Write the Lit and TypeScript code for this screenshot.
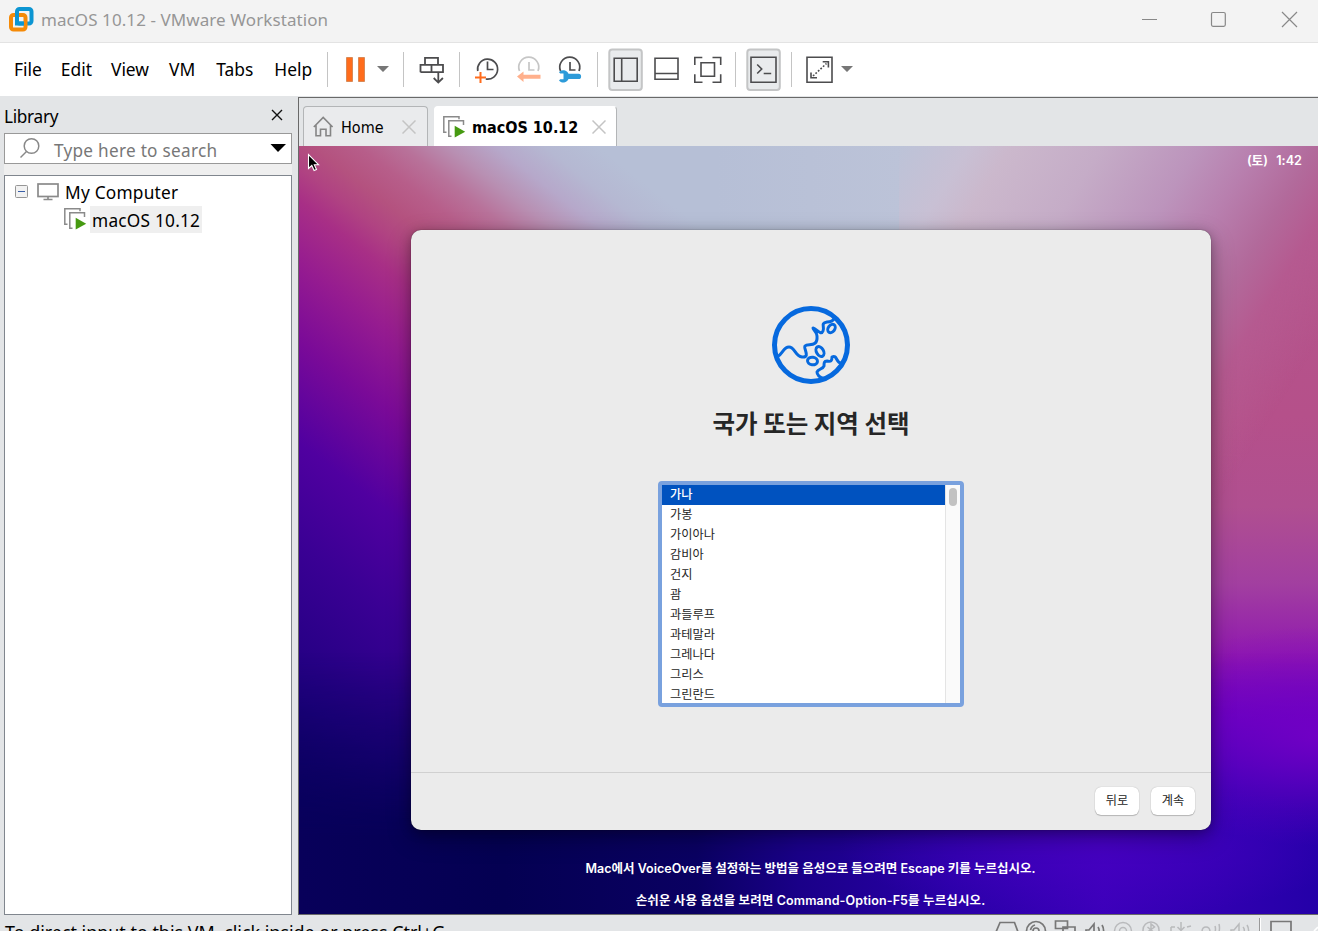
import { LitElement, html, css, svg } from "lit";
import { customElement } from "lit/decorators.js";

const countries = ["가나", "가봉", "가이아나", "감비아", "건지", "괌", "과들루프", "과테말라", "그레나다", "그리스", "그린란드"];

const vmIcon = html`<svg width="24" height="24" viewBox="0 0 24 24" fill="none" stroke="#8a8a8a" stroke-width="1.5">
  <path d="M4.5 17.2H1.8V1.8H17V4.2M9.5 21.2H6.8V5.8H21.5V10"/><path d="M12.7 10.8V22.6L23.2 16.7Z" fill="#469a11" stroke="none"/></svg>`;

@customElement("app-root")
export class AppRoot extends LitElement {
  static styles = css`
    :host { display: flex; flex-direction: column; width: 1318px; height: 931px; overflow: hidden; background: #e3e5e7; color: #000; font-family: "Noto Sans", sans-serif; }
    * { box-sizing: border-box; }
    svg { display: block; flex: none; }
    .titlebar { height: 43px; flex: none; background: #f3f3f3; border-bottom: 1px solid #e3e3e3; display: flex; padding: 7px 20px 0 9px; }
    .titlebar .name { margin: -1px 0 0 7px; line-height: 28px; font-size: 17px; color: #969696; flex: 1; letter-spacing: 0.08px; }
    .winbtns { display: flex; gap: 54px; padding-top: 4px; }
    .winbtns .min { margin-right: -2px; }
    .toolbar { height: 54px; flex: none; background: #fff; display: flex; padding-left: 14px; border-bottom: 1px solid #e3e5e7; }
    .menu { display: flex; gap: 20px; font-size: 17.4px; line-height: 53px; width: 313px; }
    .menu span:nth-child(2), .menu span:nth-child(3) { margin-left: -1px; }
    .menu span:nth-child(5), .menu span:nth-child(6) { margin-left: 1px; }
    .body { flex: none; height: 818px; display: flex; }
    .library { width: 298px; padding: 0 6px 0 4px; display: flex; flex-direction: column; }
    .libhead { height: 36px; display: flex; justify-content: space-between; padding: 0 9px 0 0; font-size: 17.2px; letter-spacing: -.3px; line-height: 39px; }
    .libhead svg { margin-top: 12px; }
    .search { height: 31px; border: 1px solid #999; background: #fff; display: flex; align-items: flex-start; font-size: 17.2px; line-height: 33px; color: #777; padding-right: 5px; }
    .search .ph { flex: 1; margin-left: 13px; letter-spacing: .27px; }
    .band { height: 11px; background: #efefef; }
    .tree { flex: 1; border: 1px solid #80868e; background: #fff; padding-top: 2px; font-size: 17.3px; letter-spacing: .22px; }
    .row { display: flex; align-items: center; height: 27px; }
    .root { padding-left: 10px; gap: 9px; }
    .root .label { margin-left: -3px; line-height: 27px; padding-top: 1px; }
    .child { padding-left: 58px; height: 28px; }
    .child .label { background: #efefef; height: 27px; line-height: 29px; padding: 0 2px; margin-left: 3px; }
    .main { flex: 1; border-left: 1px solid #696969; border-top: 1px solid #696969; border-bottom: 1px solid #696969; display: flex; flex-direction: column; }
    .tabs { height: 48px; display: flex; align-items: flex-end; padding-left: 4px; gap: 6px; font: 16px "DejaVu Sans Condensed", "DejaVu Sans", sans-serif; font-stretch: condensed; }
    .tab { display: flex; align-items: center; height: 40px; border: 1px solid #b3b5b7; border-bottom: 0; border-radius: 4px 4px 0 0; background: #eaebed; }
    .tab .t { padding-top: 2px; }
    .home { width: 125px; padding: 0 11px 0 9px; }
    .home .t { margin-left: 7px; flex: 1; }
    .active { width: 183px; background: #fff; border-color: #fff #b3b5b7 #fff #fff; font-weight: 700; padding: 0 10px 0 7px; }
    .active .t { margin-left: 6px; flex: 1; white-space: nowrap; }
    .screen { height: 768px; position: relative; overflow: hidden; display: flex; flex-direction: column; align-items: center; font-family: Inter, "Noto Sans CJK KR", sans-serif; background: #38009a; }
    .layer, .pointer { position: absolute; inset: 0; }
    .base { background: linear-gradient(180deg, #b5588c 0, #b5508a 35%, #b04f90 47%, #a23fa0 57%, #8f16b0 67%, #7800c4 75%, #5000c0 83%, #3600b4 90%, #2200a8 100%); }
    .sky { height: 100px; right: 300px; background: linear-gradient(90deg, #b6bfd6 58%, #bcc3d8 84%); }
    .left { width: 420px; background: linear-gradient(218deg, #b6bfd6 0, #b6bfd6 75px, #b5b8d2 108px, #b6a8ca 138px, #b88fb2 168px, #b8729a 195px, #b75e8a 222px, #b4527f 250px, #b04382 275px, #a82f86 301px, #961c90 350px, #7a0a98 412px, #5000a0 492px, #3a0094 572px, #200080 690px, #0c0068 776px, #08005a 870px); }
    .right { left: 600px; background: linear-gradient(122deg, #bcc3d8 0, #c8c0d4 60px, #cbb8cc 95px, #c5acc7 173px, #bc94bc 255px, #b87fae 305px, #b26a9b 355px, #b55a90 395px, #b5588c00 460px); -webkit-mask-image: linear-gradient(#000 40%, transparent 60%); mask-image: linear-gradient(#000 40%, transparent 60%); }
    .bottom { background: linear-gradient(90deg, #08005a 0, #040052 20%, #0a0062 39%, #1a0088 49%, #2a00a8 64%, #3c00ba 79%, #3000b0 91%, #2400a8 100%); -webkit-mask-image: linear-gradient(transparent 66%, #0008 80%, #000 90%); mask-image: linear-gradient(transparent 66%, #0008 80%, #000 90%); }
    .glow { background: radial-gradient(ellipse 260px 70px at 800px 700px, #4a00c4aa, #4a00c400), radial-gradient(ellipse 200px 110px at 1019px 590px, #7800c8cc, #7800c800); }
    .pointer { inset: 7px auto auto 8px; }
    .clock { position: relative; align-self: stretch; flex: none; text-align: right; height: 84px; line-height: 29px; padding-right: 16px; color: #fff; font-size: 12.700px; font-weight: 600; word-spacing: 5px; }
    .dialog { position: relative; width: 800px; height: 600px; margin-left: 5px; flex: none; border-radius: 10px; background: #ebebeb; box-shadow: 0 0 1px #000a, 0 2px 12px #0004, 0 8px 24px #0004; display: flex; flex-direction: column; align-items: center; }
    .globe { margin-top: 75px; }
    .dialog h1 { margin: 18px 0 0; height: 40px; font: 700 24.500px/40px "Noto Sans CJK KR", sans-serif; color: #262626; }
    .list { margin-top: 38px; width: 306px; height: 226px; border: 4px solid #79a1de; border-radius: 4px; background: #fff; display: flex; overflow: hidden; }
    .items { flex: 1; color: #262626; font: 400 12.200px/20px "Noto Sans CJK KR", sans-serif; }
    .item { height: 20px; padding-left: 8px; line-height: 19px; }
    .sel { background: #0052bf; color: #fff; font-weight: 500; }
    .scroll { width: 15px; background: #fafafa; border-left: 1px solid #e4e4e4; padding: 3px 0 0 3px; }
    .thumb { width: 8px; height: 18px; border-radius: 4px; background: #c2c2c2; }
    .foot { margin-top: auto; align-self: stretch; height: 58px; border-top: 1px solid #d0d0d0; display: flex; justify-content: flex-end; gap: 12px; padding: 14px 16px 0; }
    .btn { width: 44px; height: 28px; border-radius: 6px; background: #fff; box-shadow: 0 0 1px #0005, 0 1px 1px #0003; text-align: center; color: #262626; font: 400 12.200px/27px "Noto Sans CJK KR", sans-serif; }
    .hint { position: relative; margin-left: 4px; color: #fff; font-size: 12.500px; font-weight: 600; line-height: 32px; white-space: nowrap; height: 32px; }
    .first { margin-top: 23px; }
    .second { letter-spacing: .13px; }
    .status { height: 17px; display: flex; justify-content: space-between; overflow: hidden; }
    .msg { font-size: 17.900px; line-height: 24px; padding: 5px 0 0 5px; white-space: nowrap; }
  `;

  toolbarIcons() {
    return svg`
      <g fill="#c4c4c4"><path d="M0 9h1v35h-1zM76 9h1v35h-1zM132 9h1v35h-1zM270 9h1v35h-1zM408 9h1v35h-1zM464 9h1v35h-1z"/></g>
      <path d="M19.500 14.500h6v24h-6zM31.500 14.500h6v24h-6z" fill="#ff6c1c" stroke="#c9763f" stroke-width=".7"/>
      <path d="M50 23h12l-6 6zM514 23h12l-6 6z" fill="#777"/>
      <g fill="none" stroke="#4c4c4e" stroke-width="1.700">
        <path d="M98 21.800V14.800h13v7M93.500 29.200v-7.400h22.500v7.400H93.500M104.500 22v7M111.300 29v10.500M106.700 35l4.600 4.600 4.600-4.600" stroke-width="1.800"/>
        <path d="M150.800 28.500a10 10 0 1 1 8 8M160.500 19v8h6" transform="translate(0 -.5)"/>
        <path d="M192.500 28a10 10 0 1 1 18.500 0M202 19v8h5.500" stroke="#c6c6c6"/>
        <path d="M233.500 28a10 10 0 1 1 18.500 0M243 19v8h5.500"/>
      </g>
      <path d="M153.500 29v11M148 34.500h11" stroke="#ff6c1c" stroke-width="2"/>
      <path d="M190 33.500l6.500-5v3.200h17v4h-17v3.200z" fill="#ffb08c"/>
      <path d="M232 29.200a5.600 5.600 0 0 1 9.500 1.600h10a2.600 2.600 0 0 1 0 5.200h-10a5.600 5.600 0 0 1-9.500 1.600l1.200-1.400h3.300v-5.600h-3.300z" fill="#2d9bd9"/>
      <g fill="#e9ebed" stroke="#c4c5c6" stroke-width="2"><rect x="282.300" y="6.500" width="32.500" height="40.500" rx="3"/><rect x="420.300" y="6.500" width="32.500" height="40.500" rx="3"/></g>
      <g fill="none" stroke="#4c4c4e" stroke-width="1.600">
        <path d="M287.200 15.300h23v23h-23zM294.700 15.500v22.500M328 15.300h23v21h-23zM328.200 30.500h22.500"/>
        <path d="M374 19.800h13.500v13.500h-13.500z"/>
        <path d="M367.800 22v-7.500h7.500M385.500 14.500h8.200V22M393.700 31.200v8H385.500M375.500 39.200h-7.700v-8"/>
        <path d="M424 14.300h25v25h-25zM480 14.300h25v25h-25z"/>
        <path d="M430.200 21.500l4.500 4.500-4.500 4.500M436.700 30.500h7.500M495.700 18.800h5.700v5.700M484 29.500v5.300h6"/>
        <path d="M486 33L499.500 20.500" stroke-dasharray="1.800 1.600"/>
      </g>`;
  }

  render() {
    return html`
      <div class="titlebar">
        <svg width="25" height="25" viewBox="0 0 25 25" fill="none" stroke-width="4"><rect x="8" y="2" width="14.500" height="14.500" rx="2.500" stroke="#0c95d2"/><rect x="2" y="8" width="14.500" height="14.500" rx="2.500" stroke="#f58a07"/><path d="M8 6v10.500h7" stroke="#0c95d2"/></svg>
        <span class="name">macOS 10.12 - VMware Workstation</span>
        <div class="winbtns">
          <svg class="min" width="17" height="17" stroke="#888" fill="none"><path d="M1 8.500h15"/></svg>
          <svg width="17" height="17" stroke="#888" fill="none" stroke-width="1.200"><rect x="1.500" y="1.500" width="13.800" height="13.800" rx="1.500"/></svg>
          <svg width="17" height="17" stroke="#888" fill="none" stroke-width="1.200"><path d="M1 1l15 15M16 1L1 16"/></svg>
        </div>
      </div>
      <div class="toolbar">
        <div class="menu"><span>File</span><span>Edit</span><span>View</span><span>VM</span><span>Tabs</span><span>Help</span></div>
        <svg width="540" height="53">${this.toolbarIcons()}</svg>
      </div>
      <div class="body">
        <div class="library">
          <div class="libhead"><span>Library</span><svg width="12" height="12" stroke="#111" stroke-width="1.400"><path d="M1 1l10 10M11 1L1 11"/></svg></div>
          <div class="search">
            <svg width="36" height="29" fill="none" stroke="#888" stroke-width="1.500"><circle cx="26.500" cy="12" r="7.300"/><path d="M21.500 17.500L15.500 23.500"/></svg>
            <span class="ph">Type here to search</span>
            <svg width="16" height="29"><path d="M.5 10h15.500l-8 8z"/></svg>
          </div>
          <div class="band"></div>
          <div class="tree">
            <div class="row root">
              <svg width="13" height="13"><rect x=".5" y=".5" width="12" height="12" rx="1" fill="#f2f2f2" stroke="#969696"/><path d="M3 6.500h7" stroke="#3a5fa8"/></svg>
              <svg width="22" height="18" fill="none" stroke="#8a8a8a" stroke-width="1.700"><rect x="1" y="1" width="20" height="12.500"/><path d="M11 13.500v3M6.500 16.500h9"/></svg>
              <span class="label">My Computer</span>
            </div>
            <div class="row child">${vmIcon}<span class="label">macOS 10.12</span></div>
          </div>
        </div>
        <div class="main">
          <div class="tabs">
            <div class="tab home">
              <svg width="21" height="21" fill="none" stroke="#858585" stroke-width="1.600"><path d="M.8 11L10.200 1.500 19.600 11M3 9.200v10.500h4.500v-6.500h5.500v6.500h4.500V9.200"/></svg>
              <span class="t">Home</span>
              <svg width="14" height="14" stroke="#c4c4c4" stroke-width="1.500"><path d="M.5.5l13 13M13.500.5l-13 13"/></svg>
            </div>
            <div class="tab active">${vmIcon}<span class="t">macOS 10.12</span>
              <svg width="14" height="14" stroke="#c4c4c4" stroke-width="1.500"><path d="M.5.5l13 13M13.500.5l-13 13"/></svg>
            </div>
          </div>
          <div class="screen">
            <div class="layer base"></div><div class="layer sky"></div><div class="layer left"></div><div class="layer right"></div><div class="layer bottom"></div><div class="layer glow"></div>
            <svg class="pointer" width="14" height="20" viewBox="0 0 14 20"><path d="M1.500 1.500v14l3.300-3 2.300 5 2.400-1-2.200-4.800h4.200z" fill="#000" stroke="#fff" stroke-width="1.100"/></svg>
            <div class="clock">(토) 1:42</div>
            <div class="dialog">
              <svg class="globe" width="80" height="80" viewBox="0 0 80 80" fill="none" stroke="#0669de" stroke-width="3" stroke-linecap="round" stroke-linejoin="round">
                <circle cx="40" cy="40" r="36.500" stroke-width="5"/>
                <path d="M6 52C12 49 12 42 18 42C24 42 24 51 31 52C40 53 32 43 34 41C37 38 47 43 46 31C46 27 42 25 42 23C46 24 50 31 52 26C54 22 49 18 56 17C60 17 63 15 64 12"/>
                <ellipse cx="60.500" cy="23.500" rx="3.300" ry="4.500" transform="rotate(35 60.500 23.500)"/><ellipse cx="49" cy="46.500" rx="3.500" ry="5.300" transform="rotate(-30 49 46.500)"/><ellipse cx="41.500" cy="56" rx="5" ry="3.800" transform="rotate(8 41.500 56)"/>
                <path d="M53 74C48 72 46 70 46 67C47 64 52 64 53 61C53 58 53 56 56 56C60 57 61 56 61 52C66 49 65 58 70 58"/>
              </svg>
              <h1>국가 또는 지역 선택</h1>
              <div class="list">
                <div class="items">${countries.map((c, i) => html`<div class="item ${i === 0 ? "sel" : ""}">${c}</div>`)}</div>
                <div class="scroll"><div class="thumb"></div></div>
              </div>
              <div class="foot"><div class="btn">뒤로</div><div class="btn">계속</div></div>
            </div>
            <div class="hint first">Mac에서 VoiceOver를 설정하는 방법을 음성으로 들으려면 Escape 키를 누르십시오.</div>
            <div class="hint second">손쉬운 사용 옵션을 보려면 Command-Option-F5를 누르십시오.</div>
          </div>
        </div>
      </div>
      <div class="status">
        <span class="msg">To direct input to this VM, click inside or press Ctrl+G.</span>
        <svg width="323" height="17" fill="none" stroke="#777" stroke-width="1.700">
          <path d="M1 17L5 7.500h14.500L23 17"/>
          <circle cx="41" cy="16" r="9.500"/><circle cx="41" cy="16" r="3"/><path d="M35.500 15q1-4 4.500-5"/>
          <path d="M60.500 13.500v-7.500h12v7.500zM68 17v-5h12v6"/>
          <path d="M91 17v-2h3l5-6v9M103 12q1.500 2 1 5M107 10q2 3 1.500 7"/>
          <g stroke="#b9babc" stroke-width="1.500"><circle cx="128" cy="16" r="8.500"/><circle cx="128" cy="16" r="3.500"/><circle cx="156" cy="15" r="8"/><path d="M152.500 12l6 5M156 18V9l3.500 3-7 5M186 7v9M182.500 12l3.500 3.500 3.500-3.500M176 12h4M192 12l4-1M176 17v-5M207 17q0-5 4-5t4 5M220 11q1 3 0 6M224 9q1 4 0 8M236 17v-2h3l5-6v9M248 12q2 2 1 5M252 10q2 3 1.500 7"/></g>
          <path d="M264.500 3v13" stroke="#999" stroke-width="1"/><path d="M265.500 3v13" stroke="#fff" stroke-width="1"/>
          <path d="M276 17V6.500h20V17"/>
          <path d="M319 16l4-4" stroke="#fff"/>
        </svg>
      </div>`;
  }
}
